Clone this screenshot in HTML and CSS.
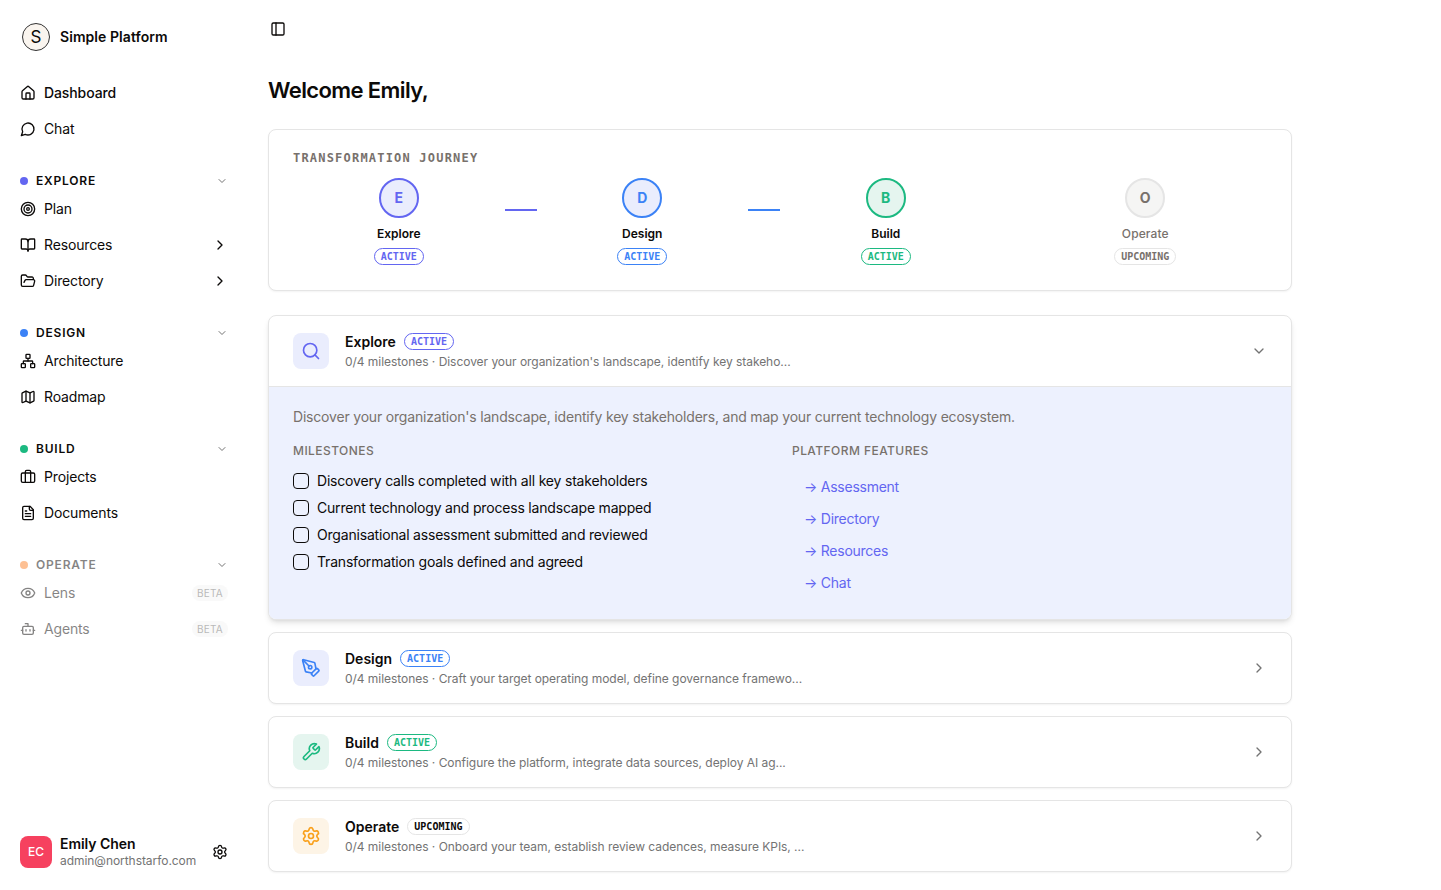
FILE: index.html
```html
<!DOCTYPE html>
<html lang="en">
  <head>
    <meta charset="UTF-8" />
    <meta name="viewport" content="width=device-width, initial-scale=1.0" />
    <title>Simple Platform</title>
    <link rel="stylesheet" href="styles.css">
  </head>
  <body>
    <!-- Icon sprite -->
    <svg class="sprite">
      <symbol id="home" viewBox="0 0 24 24"><path d="M15 21v-8a1 1 0 0 0-1-1h-4a1 1 0 0 0-1 1v8" /><path d="M3 10a2 2 0 0 1 .709-1.528l7-5.999a2 2 0 0 1 2.582 0l7 5.999A2 2 0 0 1 21 10v9a2 2 0 0 1-2 2H5a2 2 0 0 1-2-2z" /></symbol>
      <symbol id="chat" viewBox="0 0 24 24"><path d="M7.9 20A9 9 0 1 0 4 16.100L2 22Z" /></symbol>
      <symbol id="target" viewBox="0 0 24 24"><circle cx="12" cy="12" r="10" /><circle cx="12" cy="12" r="6" /><circle cx="12" cy="12" r="2" /></symbol>
      <symbol id="book" viewBox="0 0 24 24"><path d="M12 7v14" /><path d="M3 18a1 1 0 0 1-1-1V4a1 1 0 0 1 1-1h5a4 4 0 0 1 4 4 4 4 0 0 1 4-4h5a1 1 0 0 1 1 1v13a1 1 0 0 1-1 1h-6a3 3 0 0 0-3 3 3 3 0 0 0-3-3z" /></symbol>
      <symbol id="folder" viewBox="0 0 24 24"><path d="m6 14 1.500-2.900A2 2 0 0 1 9.240 10H20a2 2 0 0 1 1.940 2.500l-1.540 6a2 2 0 0 1-1.950 1.500H4a2 2 0 0 1-2-2V5a2 2 0 0 1 2-2h3.900a2 2 0 0 1 1.690.900l.810 1.200a2 2 0 0 0 1.670.900H18a2 2 0 0 1 2 2v2" /></symbol>
      <symbol id="network" viewBox="0 0 24 24"><rect x="16" y="16" width="6" height="6" rx="1" /><rect x="2" y="16" width="6" height="6" rx="1" /><rect x="9" y="2" width="6" height="6" rx="1" /><path d="M5 16v-3a1 1 0 0 1 1-1h12a1 1 0 0 1 1 1v3" /><path d="M12 12V8" /></symbol>
      <symbol id="map" viewBox="0 0 24 24"><path d="M14.106 5.553a2 2 0 0 0 1.788 0l3.659-1.830A1 1 0 0 1 21 4.619v12.764a1 1 0 0 1-.553.894l-4.553 2.277a2 2 0 0 1-1.788 0l-4.212-2.106a2 2 0 0 0-1.788 0l-3.659 1.830A1 1 0 0 1 3 19.381V6.618a1 1 0 0 1 .553-.894l4.553-2.277a2 2 0 0 1 1.788 0z" /><path d="M15 5.764v15" /><path d="M9 3.236v15" /></symbol>
      <symbol id="briefcase" viewBox="0 0 24 24"><path d="M16 20V4a2 2 0 0 0-2-2h-4a2 2 0 0 0-2 2v16" /><rect x="2" y="6" width="20" height="14" rx="2" /></symbol>
      <symbol id="file" viewBox="0 0 24 24"><path d="M15 2H6a2 2 0 0 0-2 2v16a2 2 0 0 0 2 2h12a2 2 0 0 0 2-2V7Z" /><path d="M14 2v4a2 2 0 0 0 2 2h4" /><path d="M10 9H8" /><path d="M16 13H8" /><path d="M16 17H8" /></symbol>
      <symbol id="eye" viewBox="0 0 24 24"><path d="M2.062 12.348a1 1 0 0 1 0-.696 10.750 10.750 0 0 1 19.876 0 1 1 0 0 1 0 .696 10.750 10.750 0 0 1-19.876 0" /><circle cx="12" cy="12" r="3" /></symbol>
      <symbol id="bot" viewBox="0 0 24 24"><path d="M12 8V4H8" /><rect x="4" y="8" width="16" height="12" rx="2" /><path d="M2 14h2" /><path d="M20 14h2" /><path d="M15 13v2" /><path d="M9 13v2" /></symbol>
      <symbol id="gear" viewBox="0 0 24 24"><path d="M9.671 4.136a2.340 2.340 0 0 1 4.659 0 2.340 2.340 0 0 0 3.319 1.915 2.340 2.340 0 0 1 2.330 4.033 2.340 2.340 0 0 0 0 3.831 2.340 2.340 0 0 1-2.330 4.033 2.340 2.340 0 0 0-3.319 1.915 2.340 2.340 0 0 1-4.659 0 2.340 2.340 0 0 0-3.320-1.915 2.340 2.340 0 0 1-2.330-4.033 2.340 2.340 0 0 0 0-3.831A2.340 2.340 0 0 1 6.350 6.051a2.340 2.340 0 0 0 3.319-1.915" /><circle cx="12" cy="12" r="3" /></symbol>
      <symbol id="panel" viewBox="0 0 24 24"><rect x="3" y="3" width="18" height="18" rx="2" /><path d="M9 3v18" /></symbol>
      <symbol id="down" viewBox="0 0 24 24"><path d="m6 9 6 6 6-6" /></symbol>
      <symbol id="right" viewBox="0 0 24 24"><path d="m9 18 6-6-6-6" /></symbol>
      <symbol id="search" viewBox="0 0 24 24"><circle cx="11" cy="11" r="8" /><path d="m21 21-4.300-4.300" /></symbol>
      <symbol id="pen" viewBox="0 0 24 24"><path d="M15.707 21.293a1 1 0 0 1-1.414 0l-1.586-1.586a1 1 0 0 1 0-1.414l5.586-5.586a1 1 0 0 1 1.414 0l1.586 1.586a1 1 0 0 1 0 1.414z" /><path d="m18 13-1.375-6.874a1 1 0 0 0-.746-.776L3.235 2.028a1 1 0 0 0-1.207 1.207L5.350 15.879a1 1 0 0 0 .776.746L13 18" /><path d="m2.300 2.300 7.286 7.286" /><circle cx="11" cy="11" r="2" /></symbol>
      <symbol id="wrench" viewBox="0 0 24 24"><path d="M14.700 6.300a1 1 0 0 0 0 1.400l1.600 1.600a1 1 0 0 0 1.400 0l3.770-3.770a6 6 0 0 1-7.940 7.940l-6.910 6.910a2.120 2.120 0 0 1-3-3l6.910-6.910a6 6 0 0 1 7.940-7.940l-3.760 3.760z" /></symbol>
    </svg>

    <aside class="sidebar">
      <div class="brand">
        <span class="logo">S</span>
        <span>Simple Platform</span>
      </div>

      <nav>
        <div class="nav-group">
          <a class="nav-item current"><svg class="icon"><use href="#home" /></svg>Dashboard</a>
          <a class="nav-item"><svg class="icon"><use href="#chat" /></svg>Chat</a>
        </div>

        <div class="nav-group">
          <div class="nav-title"><i class="dot explore"></i>EXPLORE<svg class="icon small"><use href="#down" /></svg></div>
          <a class="nav-item"><svg class="icon"><use href="#target" /></svg>Plan</a>
          <a class="nav-item"><svg class="icon"><use href="#book" /></svg>Resources<svg class="icon end"><use href="#right" /></svg></a>
          <a class="nav-item"><svg class="icon"><use href="#folder" /></svg>Directory<svg class="icon end"><use href="#right" /></svg></a>
        </div>

        <div class="nav-group">
          <div class="nav-title"><i class="dot design"></i>DESIGN<svg class="icon small"><use href="#down" /></svg></div>
          <a class="nav-item"><svg class="icon"><use href="#network" /></svg>Architecture</a>
          <a class="nav-item"><svg class="icon"><use href="#map" /></svg>Roadmap</a>
        </div>

        <div class="nav-group">
          <div class="nav-title"><i class="dot build"></i>BUILD<svg class="icon small"><use href="#down" /></svg></div>
          <a class="nav-item"><svg class="icon"><use href="#briefcase" /></svg>Projects</a>
          <a class="nav-item"><svg class="icon"><use href="#file" /></svg>Documents</a>
        </div>

        <div class="nav-group disabled">
          <div class="nav-title"><i class="dot operate"></i><span>OPERATE</span><svg class="icon small"><use href="#down" /></svg></div>
          <a class="nav-item"><svg class="icon"><use href="#eye" /></svg>Lens<span class="beta">BETA</span></a>
          <a class="nav-item"><svg class="icon"><use href="#bot" /></svg>Agents<span class="beta">BETA</span></a>
        </div>
      </nav>

      <div class="user">
        <span class="avatar">EC</span>
        <div class="user-info">
          <strong>Emily Chen</strong>
          <span>admin@northstarfo.com</span>
        </div>
        <svg class="icon"><use href="#gear" /></svg>
      </div>
    </aside>

    <main>
      <svg class="icon toggle"><use href="#panel" /></svg>
      <h1>Welcome Emily,</h1>

      <!-- Journey -->
      <section class="card journey">
        <h2>TRANSFORMATION JOURNEY</h2>
        <div class="steps">
          <div class="step explore">
            <div class="step-body"><span class="circle">E</span><span class="step-name">Explore</span><span class="badge">ACTIVE</span></div>
            <div class="line"></div>
          </div>
          <div class="step design">
            <div class="step-body"><span class="circle">D</span><span class="step-name">Design</span><span class="badge">ACTIVE</span></div>
            <div class="line"></div>
          </div>
          <div class="step build">
            <div class="step-body"><span class="circle">B</span><span class="step-name">Build</span><span class="badge">ACTIVE</span></div>
            <div class="line hidden"></div>
          </div>
          <div class="step upcoming">
            <div class="step-body"><span class="circle">O</span><span class="step-name">Operate</span><span class="badge">UPCOMING</span></div>
          </div>
        </div>
      </section>

      <!-- Phases -->
      <section class="phases">
        <div class="card phase open explore">
          <div class="phase-header">
            <span class="tile"><svg class="icon"><use href="#search" /></svg></span>
            <div class="phase-info">
              <h3>Explore <span class="badge">ACTIVE</span></h3>
              <p>0/4 milestones · Discover your organization's landscape, identify key stakeho...</p>
            </div>
            <svg class="icon chevron"><use href="#down" /></svg>
          </div>
          <div class="phase-content">
            <p>Discover your organization's landscape, identify key stakeholders, and map your current technology ecosystem.</p>
            <div class="columns">
              <div>
                <h4>MILESTONES</h4>
                <div class="milestones">
                  <label><input type="checkbox" />Discovery calls completed with all key stakeholders</label>
                  <label><input type="checkbox" />Current technology and process landscape mapped</label>
                  <label><input type="checkbox" />Organisational assessment submitted and reviewed</label>
                  <label><input type="checkbox" />Transformation goals defined and agreed</label>
                </div>
              </div>
              <div>
                <h4>PLATFORM FEATURES</h4>
                <div class="features">
                  <a>→ Assessment</a>
                  <a>→ Directory</a>
                  <a>→ Resources</a>
                  <a>→ Chat</a>
                </div>
              </div>
            </div>
          </div>
        </div>

        <div class="card phase design">
          <div class="phase-header">
            <span class="tile"><svg class="icon"><use href="#pen" /></svg></span>
            <div class="phase-info">
              <h3>Design <span class="badge">ACTIVE</span></h3>
              <p>0/4 milestones · Craft your target operating model, define governance framewo...</p>
            </div>
            <svg class="icon chevron"><use href="#right" /></svg>
          </div>
        </div>

        <div class="card phase build">
          <div class="phase-header">
            <span class="tile"><svg class="icon"><use href="#wrench" /></svg></span>
            <div class="phase-info">
              <h3>Build <span class="badge">ACTIVE</span></h3>
              <p>0/4 milestones · Configure the platform, integrate data sources, deploy AI ag...</p>
            </div>
            <svg class="icon chevron"><use href="#right" /></svg>
          </div>
        </div>

        <div class="card phase operate">
          <div class="phase-header">
            <span class="tile"><svg class="icon"><use href="#gear" /></svg></span>
            <div class="phase-info">
              <h3>Operate <span class="badge">UPCOMING</span></h3>
              <p>0/4 milestones · Onboard your team, establish review cadences, measure KPIs, ...</p>
            </div>
            <svg class="icon chevron"><use href="#right" /></svg>
          </div>
        </div>
      </section>
    </main>
  </body>
</html>
```
FILE: styles.css
```css
* {
  box-sizing: border-box;
}

body {
  font-family: Inter, sans-serif;
  font-size: 14px;
  line-height: 20px;
  background-color: #fff;
  color: #0c0a09;
  display: flex;
  height: 100vh;
  margin: 0;
  overflow: hidden;
}

h1,
h2,
h3,
h4,
p {
  margin: 0;
}

.sprite {
  display: none;
}

.icon {
  width: 16px;
  height: 16px;
  flex-shrink: 0;
  fill: none;
  stroke: currentColor;
  stroke-width: 2;
  stroke-linecap: round;
  stroke-linejoin: round;
}

.explore {
  --accent: #6366f1;
  --tint: #eaedfd;
}

.design {
  --accent: #3b82f6;
  --tint: #eaedfd;
}

.build {
  --accent: #1cb981;
  --tint: #e5f5ef;
}

.operate {
  --accent: #f9a01b;
  --tint: #fdf4e6;
}

.upcoming {
  --accent: #e5e5e5;
  --tint: #f5f5f4;
}

/* Sidebar */
.sidebar {
  width: 248px;
  padding: 21px 20px;
  display: flex;
  flex-direction: column;
  flex-shrink: 0;
}

.brand {
  display: flex;
  align-items: center;
  gap: 10px;
  height: 32px;
  padding-left: 2px;
  margin-bottom: 24px;
  font-weight: 600;
  letter-spacing: 0.06px;
}

.logo {
  width: 28px;
  height: 28px;
  border: 1px solid #333;
  border-radius: 50%;
  background-color: #faf5ef;
  font-size: 17px;
  font-weight: 400;
  line-height: 27px;
  text-align: center;
}

.nav-group {
  display: flex;
  flex-direction: column;
  gap: 4px;
  margin-bottom: 24px;
}

.nav-item {
  display: flex;
  align-items: center;
  gap: 8px;
  height: 32px;
  letter-spacing: -0.15px;
}

.nav-item.current {
  font-weight: 500;
  letter-spacing: -0.1px;
}

.nav-item .end {
  margin-left: auto;
}

.nav-title {
  display: flex;
  align-items: center;
  gap: 8px;
  height: 24px;
  margin-bottom: -4px;
  font-size: 12px;
  font-weight: 600;
  letter-spacing: 0.8px;
}

.dot {
  width: 8px;
  height: 8px;
  border-radius: 50%;
  background-color: var(--accent);
}

.icon.small {
  width: 12px;
  height: 12px;
  margin-left: auto;
  color: #737373;
}

.disabled .nav-title span,
.disabled .nav-item {
  opacity: 0.5;
}

.dot.operate {
  background-color: #fdc094;
}

.beta {
  margin-left: auto;
  padding: 1px 5px 0;
  border-radius: 8px;
  background-color: #f5f5f4;
  color: #737373;
  font-size: 10px;
  line-height: 15px;
  letter-spacing: 0.25px;
}

.user {
  display: flex;
  align-items: center;
  gap: 8px;
  margin-top: auto;
}

.avatar {
  width: 32px;
  height: 32px;
  border-radius: 8px;
  background-color: #f6415f;
  color: #fff;
  font-size: 12px;
  font-weight: 500;
  line-height: 32px;
  text-align: center;
}

.user-info {
  flex: 1;
}

.user-info strong,
.user-info span {
  display: block;
  font-weight: 600;
  line-height: 17px;
  letter-spacing: -0.05px;
}

.user-info span {
  color: #737373;
  font-size: 12px;
  font-weight: 400;
}

/* Main */
main {
  width: 1044px;
  padding: 21px 0 0 20px;
}

.toggle {
  display: block;
  margin-left: 2px;
}

h1 {
  margin: 37px 0 22px;
  font-size: 22px;
  font-weight: 600;
  line-height: 33px;
  letter-spacing: -0.6px;
}

.card {
  background-color: #fff;
  border: 1px solid #e5e5e5;
  border-radius: 8px;
  box-shadow: 0 1px 2px rgba(0, 0, 0, 0.05);
}

.badge {
  padding: 0 6px;
  border: 1px solid var(--accent);
  border-radius: 9px;
  color: var(--accent);
  font-family: "DejaVu Sans Mono", monospace;
  font-size: 10px;
  font-weight: 700;
  line-height: 15px;
}

.journey {
  height: 162px;
  padding: 20px 24px;
}

.journey h2 {
  margin-bottom: 12px;
  color: #78716c;
  font-family: "DejaVu Sans Mono", monospace;
  font-size: 12px;
  font-weight: 700;
  line-height: 16px;
  letter-spacing: 1.2px;
}

.steps {
  display: flex;
}

.step {
  display: flex;
  flex: 1;
  align-items: center;
}

.step-body {
  display: flex;
  flex: 1;
  flex-direction: column;
  align-items: center;
}

.circle {
  width: 40px;
  height: 40px;
  border: 2px solid var(--accent);
  border-radius: 50%;
  background-color: var(--tint);
  color: var(--accent);
  font-weight: 700;
  line-height: 36px;
  text-align: center;
}

.step-name {
  margin: 8px 0 6px;
  font-size: 12px;
  font-weight: 600;
  line-height: 16px;
}

.line {
  width: 32px;
  height: 2px;
  margin-bottom: 24px;
  background-color: var(--accent);
}

.line.hidden {
  visibility: hidden;
}

.upcoming .circle,
.upcoming .step-name,
.upcoming .badge {
  color: #78716c;
}

.upcoming .step-name {
  font-weight: 500;
  letter-spacing: 0.1px;
}

/* Phases */
.phases {
  display: flex;
  flex-direction: column;
  gap: 12px;
  margin-top: 24px;
}

.phase {
  overflow: hidden;
}

.phase.open {
  box-shadow: 0 4px 6px -1px rgba(0, 0, 0, 0.1), 0 2px 4px -2px rgba(0, 0, 0, 0.1);
}

.phase-header {
  display: flex;
  align-items: center;
  gap: 16px;
  height: 70px;
  padding: 0 24px;
}

.tile {
  display: flex;
  align-items: center;
  justify-content: center;
  width: 36px;
  height: 36px;
  border-radius: 8px;
  background-color: var(--tint);
  color: var(--accent);
}

.tile .icon {
  width: 20px;
  height: 20px;
}

.phase-info {
  flex: 1;
}

.phase-info h3 {
  display: flex;
  align-items: center;
  gap: 8px;
  margin-bottom: 1px;
  font-size: 14px;
  font-weight: 600;
  line-height: 20px;
}

.phase-info p {
  color: #737373;
  font-size: 12px;
  line-height: 18px;
  letter-spacing: -0.04px;
}

.operate .badge {
  border-color: #e5e5e5;
  color: #0c0a09;
}

.chevron {
  color: #737373;
}

.phase-content {
  padding: 20px 24px;
  border-top: 1px solid #e5e5e5;
  background-color: #edf1fe;
  letter-spacing: -0.19px;
}

.phase-content > p {
  margin-bottom: 16px;
  color: #78716c;
}

.columns {
  display: grid;
  grid-template-columns: 1fr 1fr;
  gap: 24px;
}

h4 {
  margin-bottom: 12px;
  color: #78716c;
  font-size: 12px;
  font-weight: 500;
  line-height: 16px;
  letter-spacing: 0.44px;
}

.milestones {
  display: flex;
  flex-direction: column;
  gap: 7px;
}

.milestones label {
  display: flex;
  align-items: center;
  gap: 8px;
  height: 20px;
}

.milestones input {
  appearance: none;
  width: 16px;
  height: 16px;
  margin: 0;
  border: 1px solid #0c0a09;
  border-radius: 4px;
}

.features a {
  display: flex;
  align-items: center;
  height: 32px;
  padding-left: 12px;
  color: #6366f1;
  letter-spacing: -0.25px;
}
```
